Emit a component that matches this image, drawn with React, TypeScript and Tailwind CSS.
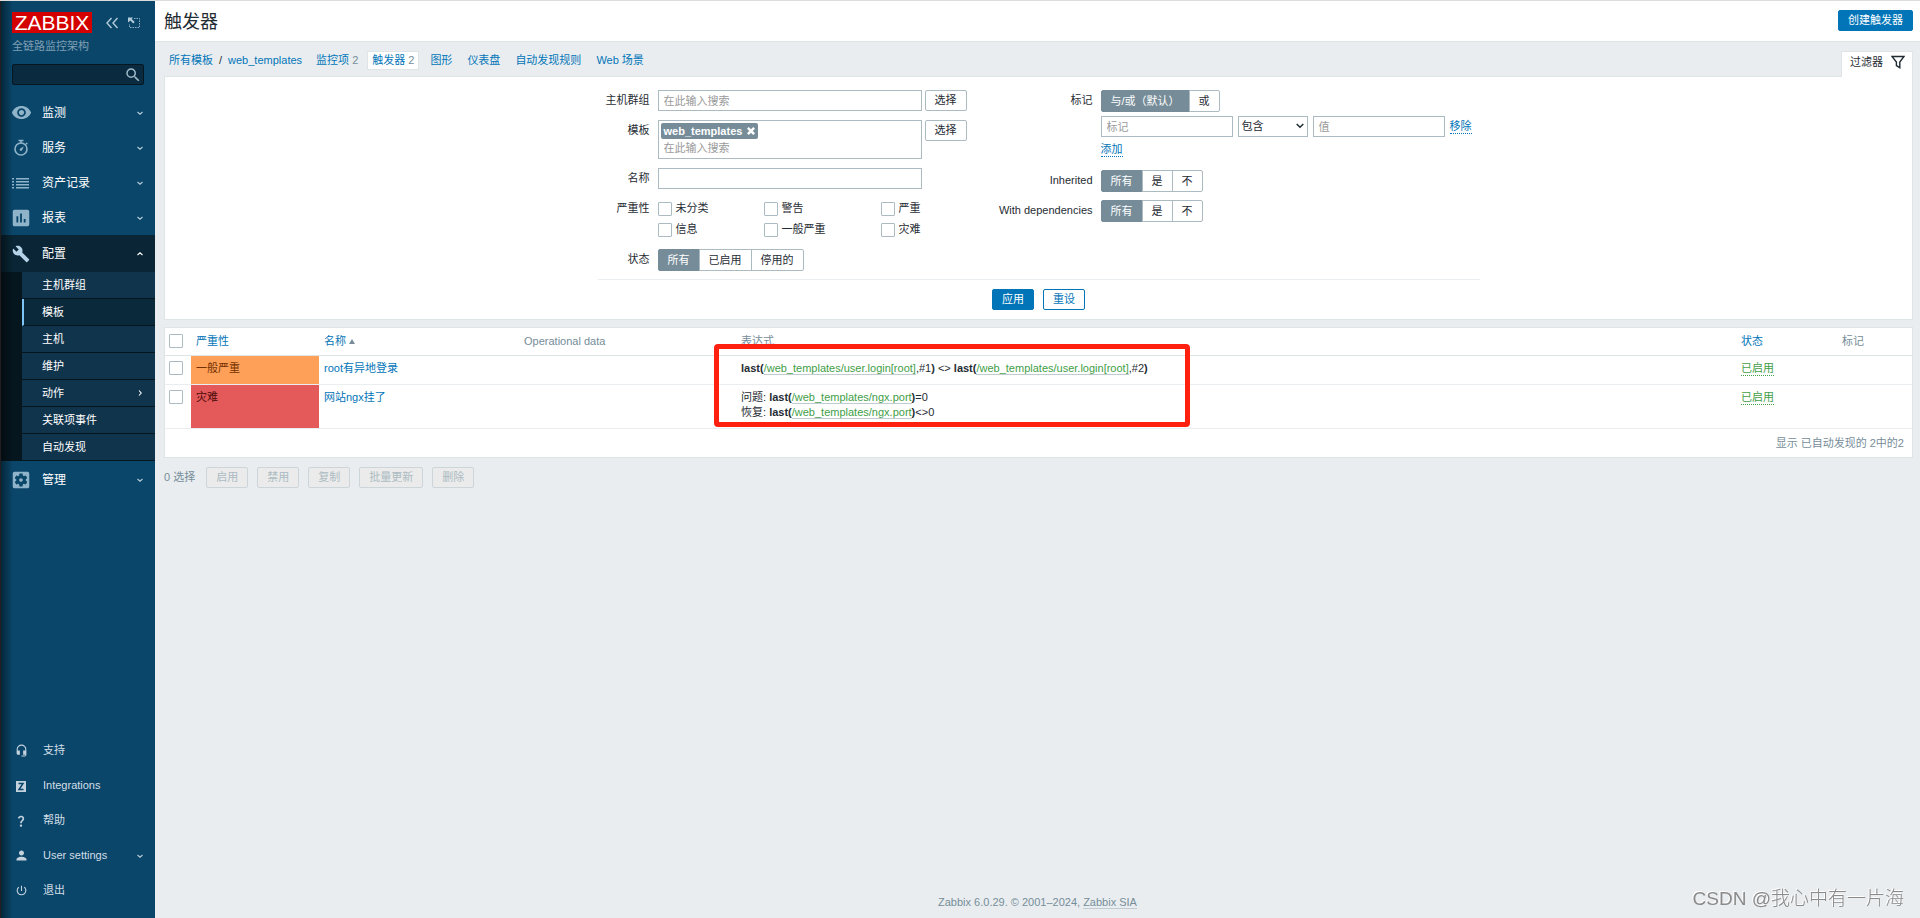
import { useState } from 'react';
import type { ReactNode } from 'react';
import {
  MdVisibility,
  MdInsertChart,
  MdBuild,
  MdSettingsApplications,
  MdSearch,
  MdHeadsetMic,
  MdQuestionMark,
  MdPerson,
  MdPowerSettingsNew,
} from 'react-icons/md';

interface Trigger {
  id: string;
  severity: string;
  severityClass: string;
  name: string;
  expression: ReactNode;
}

const StopwatchIcon = () => (
  <svg width="20" height="20" viewBox="0 0 20 20" fill="none" stroke="currentColor" strokeWidth="1.6">
    <circle cx="10" cy="11" r="6" />
    <path d="M7.5 2.5h5M10 2.5V5M15 5l1.3 1.3" />
    <path d="M9 12.6a1.6 1.6 0 0 1 .2-2.2l3.6-2-1.6 3.6a1.6 1.6 0 0 1-2.2.6z" fill="currentColor" stroke="none" />
  </svg>
);

const ListIcon = () => (
  <svg width="20" height="20" viewBox="0 0 20 20" fill="currentColor">
    <path d="M1 5h2v1.5H1zM5 5h13v1.5H5zM1 8h2v1.5H1zM5 8h13v1.5H5zM1 11h2v1.5H1zM5 11h13v1.5H5zM1 14h2v1.5H1zM5 14h13v1.5H5z" />
  </svg>
);

const IntegrationsIcon = () => (
  <svg width="12" height="12" viewBox="0 0 12 12">
    <rect x="1" y="1" width="10" height="11" fill="currentColor" />
    <path d="M3.500 3.500h4.500L4 9.500h4.500" fill="none" stroke="#0a466a" strokeWidth="1.5" />
  </svg>
);

const Chevron = ({ className = '' }: { className?: string }) => (
  <svg className={className} width="8" height="8" viewBox="0 0 8 8" fill="none" stroke="currentColor" strokeWidth="1.1">
    <path d="M1.500 3 4 5.200 6.500 3" />
  </svg>
);

const mainMenu = [
  { label: '监测', icon: <MdVisibility size={21} /> },
  { label: '服务', icon: <StopwatchIcon /> },
  { label: '资产记录', icon: <ListIcon /> },
  { label: '报表', icon: <MdInsertChart size={22} /> },
];

const configMenu = ['主机群组', '模板', '主机', '维护', '动作', '关联项事件', '自动发现'];

const footerMenu = [
  { label: '支持', icon: <MdHeadsetMic size={13} /> },
  { label: 'Integrations', icon: <IntegrationsIcon /> },
  { label: '帮助', icon: <MdQuestionMark size={14} /> },
  { label: 'User settings', icon: <MdPerson size={15} />, expandable: true },
  { label: '退出', icon: <MdPowerSettingsNew size={13} /> },
];

const severities = ['未分类', '警告', '严重', '信息', '一般严重', '灾难'];

const massActions = ['启用', '禁用', '复制', '批量更新', '删除'];

const ItemLink = ({ children }: { children: ReactNode }) => (
  <a href="#" className="border-b border-[#c0ccd2] text-[#429e47]">{children}</a>
);

const triggers: Trigger[] = [
  {
    id: 'root-login',
    severity: '一般严重',
    severityClass: 'bg-[#ffa059] text-[#733100]',
    name: 'root有异地登录',
    expression: (
      <div>
        <b>last(</b><ItemLink>/web_templates/user.login[root]</ItemLink>,#1<b>)</b> &lt;&gt;{' '}
        <b>last(</b><ItemLink>/web_templates/user.login[root]</ItemLink>,#2<b>)</b>
      </div>
    ),
  },
  {
    id: 'ngx-down',
    severity: '灾难',
    severityClass: 'bg-[#e45959] text-[#4b0c0c]',
    name: '网站ngx挂了',
    expression: (
      <>
        <div>问题: <b>last(</b><ItemLink>/web_templates/ngx.port</ItemLink><b>)</b>=0</div>
        <div>恢复: <b>last(</b><ItemLink>/web_templates/ngx.port</ItemLink><b>)</b>&lt;&gt;0</div>
      </>
    ),
  },
];

const inputClass = 'h-[21px] border border-[#acbbc2] bg-white px-[5px] outline-none placeholder:text-[#9a9a9a]';
const checkboxClass = 'size-[14px] shrink-0 appearance-none rounded-[1px] border border-[#acbbc2] bg-white checked:bg-[#0275b8]';
const plainButton = 'h-[21px] shrink-0 rounded-xs border border-[#acbbc2] bg-white px-[9px]';

function Segmented({ name, options }: { name: string; options: string[] }) {
  const [value, setValue] = useState(options[0]);

  return (
    <div role="radiogroup" aria-label={name} className="flex">
      {options.map(option => (
        <label
          key={option}
          className="relative -ml-px flex h-[22px] items-center border border-[#acbbc2] px-[9px] first:ml-0 first:rounded-l-xs last:rounded-r-xs has-checked:border-[#768d99] has-checked:bg-[#768d99] has-checked:text-white"
        >
          <input
            type="radio"
            name={name}
            className="sr-only"
            checked={value === option}
            onChange={() => setValue(option)}
          />
          {option}
        </label>
      ))}
    </div>
  );
}

function Sidebar() {
  return (
    <aside className="relative flex w-[155px] shrink-0 flex-col border-l border-[#231f20] bg-[#0a466a] text-[#d3dfe7]">
      <div className="flex items-center pt-[11px] pl-[11px]">
        <a href="#" className="flex h-[21px] w-[80px] items-center justify-center bg-[#d40000] text-[21px] leading-[21px] text-white">
          ZABBIX
        </a>
        <button aria-label="Collapse" className="ml-[13px]">
          <svg width="14" height="14" viewBox="0 0 14 14" fill="none" stroke="#b4cbd9" strokeWidth="1.4">
            <path d="M6.5 2 2 7l4.500 5M12.500 2 8 7l4.500 5" />
          </svg>
        </button>
        <button aria-label="Hide" className="ml-2">
          <svg width="14" height="14" viewBox="0 0 14 14" fill="none" stroke="#8fb0c4">
            <path d="M7 2.500h5.500v9h-10V8" strokeDasharray="1.500 1" />
            <path d="M1 1.500h5L4.700 3l3 3-1.400 1.400-3-3L1 6.500z" fill="#b4cbd9" stroke="none" />
          </svg>
        </button>
      </div>
      <div className="mt-1 pl-[11px] leading-[18px] text-[#7f9fb3]">全链路监控架构</div>

      <div className="mt-[9px] mr-[11px] mb-[10px] ml-[11px] flex h-[21px] items-center rounded-xs border border-[#061722] bg-[#0a2a3f]">
        <input aria-label="Search" type="text" className="w-full min-w-0 flex-1 bg-transparent px-1 outline-none" />
        <button aria-label="Find" className="mr-[1px] text-[#9fbac9]"><MdSearch size={18} /></button>
      </div>

      <nav>
        {mainMenu.map(item => (
          <a key={item.label} href="#" className="flex h-[35px] items-center pr-[11px] pl-[9px] text-xs text-white">
            <span className="flex w-[22px] justify-center text-[#8fb3c9]">{item.icon}</span>
            <span className="ml-[10px] flex-1">{item.label}</span>
            <Chevron className="text-[#b4cbd9]" />
          </a>
        ))}

        <a href="#" className="flex h-[37px] items-center bg-[#0a2535] pr-[11px] pl-[9px] text-xs text-white">
          <span className="flex w-[22px] justify-center text-[#b4d3e8]"><MdBuild size={18} /></span>
          <span className="ml-[10px] flex-1">配置</span>
          <Chevron className="rotate-180" />
        </a>
        <ul className="bg-[#05161f] pl-[21px]">
          {configMenu.map(label => (
            <li key={label}>
              <a
                href="#"
                className={
                  label === '模板'
                    ? 'flex h-[27px] items-center border-b border-l-2 border-b-[#05161f] border-l-[#7cc5f5] bg-[#0a2a3c] pr-[11px] pl-[18px] text-white'
                    : 'flex h-[27px] items-center border-b border-[#05161f] bg-[#10344c] pr-[11px] pl-5 text-white'
                }
              >
                <span className="flex-1">{label}</span>
                {label === '动作' && <Chevron className="-rotate-90" />}
              </a>
            </li>
          ))}
        </ul>
        <a href="#" className="flex h-[37px] items-center pr-[11px] pl-[9px] text-xs text-white">
          <span className="flex w-[22px] justify-center text-[#8fb3c9]"><MdSettingsApplications size={22} /></span>
          <span className="ml-[10px] flex-1">管理</span>
          <Chevron className="text-[#b4cbd9]" />
        </a>
      </nav>

      <nav className="mt-auto pb-[10px]">
        {footerMenu.map(item => (
          <a key={item.label} href="#" className="flex h-[35px] items-center pr-[11px] pl-[9px]">
            <span className="flex w-[22px] justify-center text-[#c3d2dd]">{item.icon}</span>
            <span className="ml-[11px] flex-1">{item.label}</span>
            {item.expandable && <Chevron className="text-[#b4cbd9]" />}
          </a>
        ))}
      </nav>

      {/* shade along the window edge */}
      <div className="pointer-events-none absolute inset-y-0 left-0 w-3 bg-linear-to-r from-black/45 to-transparent" />
    </aside>
  );
}

function PageTabs() {
  return (
    <div className="flex h-[34px] items-end justify-between pr-[7px] pl-2">
      <nav className="flex h-full items-center pt-[3px] pl-[6px] text-[#0275b8]">
        <a href="#">所有模板</a>
        <span className="mx-[6px] text-[#1f2c33]">/</span>
        <a href="#">web_templates</a>
        <a href="#" className="ml-[14px]">监控项 <span className="text-[#768d99]">2</span></a>
        <a href="#" className="mx-[9px] flex h-[19px] items-center gap-[3px] border border-[#dfe4e7] bg-white px-[4px]">
          触发器 <span className="text-[#768d99]">2</span>
        </a>
        <div className="ml-[2px] flex gap-[15px]">
          <a href="#">图形</a>
          <a href="#">仪表盘</a>
          <a href="#">自动发现规则</a>
          <a href="#">Web 场景</a>
        </div>
      </nav>
      <button className="z-10 -mb-px flex h-[26px] items-center gap-2 border border-b-0 border-[#dfe4e7] bg-white pr-[7px] pb-[5px] pl-2">
        过滤器
        <svg width="14" height="14" viewBox="0 0 14 14" fill="none" stroke="#1f2c33" strokeWidth="1.400">
          <path d="M1 1.500h12L8.800 7v5.700L5.400 10.500V7z" />
        </svg>
      </button>
    </div>
  );
}

function FilterPanel() {
  const [showTemplate, setShowTemplate] = useState(true);

  return (
    <form className="border border-[#dfe4e7] bg-white pt-[13px] pb-[9px]" onSubmit={e => e.preventDefault()}>
      <div className="mx-auto max-w-[882px]">
        <div className="flex pb-2">
          <div className="flex flex-col gap-[9px]">
            <div className="flex">
              <label htmlFor="groups" className="mr-2 w-[52px] text-right leading-[21px]">主机群组</label>
              <input id="groups" type="text" placeholder="在此输入搜索" className={`${inputClass} w-[264px]`} />
              <button type="button" className={`${plainButton} ml-[3px]`}>选择</button>
            </div>
            <div className="flex items-start">
              <label htmlFor="templates" className="mr-2 w-[52px] text-right leading-[21px]">模板</label>
              <div className="flex h-[39px] w-[264px] flex-col items-start border border-[#acbbc2] px-[2px] pt-[2px]">
                {showTemplate && (
                  <span className="flex h-[16px] items-center gap-[5px] rounded-xs bg-[#768d99] px-[3px] font-bold text-white">
                    web_templates
                    <button type="button" aria-label="Remove" onClick={() => setShowTemplate(false)}>
                      <svg width="8" height="8" viewBox="0 0 9 9" stroke="currentColor" strokeWidth="2.800">
                        <path d="M1 1l7 7M8 1 1 8" />
                      </svg>
                    </button>
                  </span>
                )}
                <input id="templates" type="text" placeholder="在此输入搜索" className="h-[18px] w-full px-[3px] outline-none placeholder:text-[#9a9a9a]" />
              </div>
              <button type="button" className={`${plainButton} ml-[3px]`}>选择</button>
            </div>
            <div className="flex">
              <label htmlFor="name" className="mr-2 w-[52px] text-right leading-[21px]">名称</label>
              <input id="name" type="text" className={`${inputClass} w-[264px]`} />
            </div>
            <div className="flex">
              <span className="mr-2 w-[52px] text-right leading-[21px]">严重性</span>
              <div className="grid grid-cols-[106px_117px_auto]">
                {severities.map(severity => (
                  <label key={severity} className="flex h-[21px] items-center gap-[4px]">
                    <input type="checkbox" className={checkboxClass} />
                    {severity}
                  </label>
                ))}
              </div>
            </div>
            <div className="flex">
              <span className="mr-2 w-[52px] text-right leading-[21px]">状态</span>
              <Segmented name="状态" options={['所有', '已启用', '停用的']} />
            </div>
          </div>

          <div className="flex flex-col gap-[8px]">
            <div className="flex">
              <span className="mr-2 w-[126px] text-right leading-[21px]">标记</span>
              <div className="flex flex-col items-start">
                <Segmented name="标记" options={['与/或（默认）', '或']} />
                <div className="mt-1 flex items-center gap-[5px]">
                  <input aria-label="标记" type="text" placeholder="标记" className={`${inputClass} w-[132px]`} />
                  <div className="relative flex">
                    <select aria-label="操作" className="h-[21px] w-[70px] appearance-none border border-[#acbbc2] bg-white pl-[3px]">
                      <option>包含</option>
                      <option>等于</option>
                    </select>
                    <svg className="pointer-events-none absolute top-[6px] right-[4px]" width="8" height="8" viewBox="0 0 8 8" fill="none" stroke="#1f2c33" strokeWidth="1.500">
                      <path d="M.7 2 4 5.300 7.300 2" />
                    </svg>
                  </div>
                  <input aria-label="值" type="text" placeholder="值" className={`${inputClass} w-[132px]`} />
                  <button type="button" className="border-b border-dotted border-[#0275b8] leading-[14px] text-[#0275b8]">移除</button>
                </div>
                <button type="button" className="mt-[5px] mb-[5px] border-b border-dotted border-[#0275b8] leading-[14px] text-[#0275b8]">添加</button>
              </div>
            </div>
            <div className="flex">
              <span className="mr-2 w-[126px] text-right leading-[21px]">Inherited</span>
              <Segmented name="Inherited" options={['所有', '是', '不']} />
            </div>
            <div className="flex">
              <span className="mr-2 w-[126px] text-right leading-[21px]">With dependencies</span>
              <Segmented name="With dependencies" options={['所有', '是', '不']} />
            </div>
          </div>
        </div>

        <div className="flex justify-center gap-[9px] border-t border-[#ebeef0] pt-[9px]">
          <button type="submit" className="h-[21px] rounded-xs border border-[#0275b8] bg-[#0275b8] px-[9px] text-white">应用</button>
          <button type="reset" className="h-[21px] rounded-xs border border-[#0275b8] bg-white px-[9px] text-[#0275b8]">重设</button>
        </div>
      </div>
    </form>
  );
}

function TriggerTable() {
  return (
    <div className="relative mt-[7px] border border-[#dfe4e7] bg-white">
      <table className="w-full table-fixed text-left">
        <colgroup>
          <col className="w-[26px]" />
          <col className="w-[128px]" />
          <col className="w-[200px]" />
          <col className="w-[217px]" />
          <col />
          <col className="w-[101px]" />
          <col className="w-[75px]" />
        </colgroup>
        <thead className="text-[#768d99]">
          <tr className="h-[27px] border-b border-[#dfe4e7] *:px-[5px] *:font-normal">
            <th><input aria-label="全选" type="checkbox" className={`${checkboxClass} -ml-px block`} /></th>
            <th><a href="#" className="text-[#0275b8]">严重性</a></th>
            <th>
              <a href="#" className="flex items-center gap-[3px] text-[#0275b8]">
                名称
                <svg width="6" height="5" viewBox="0 0 6 5" fill="#768d99"><path d="M3 0l3 5H0z" /></svg>
              </a>
            </th>
            <th>Operational data</th>
            <th>表达式</th>
            <th><a href="#" className="text-[#0275b8]">状态</a></th>
            <th>标记</th>
          </tr>
        </thead>
        <tbody>
          {triggers.map(trigger => (
            <tr key={trigger.id} className="border-b border-[#ebeef0] align-top leading-[15px] *:px-[5px] *:pt-[5px] *:pb-[8px]">
              <td><input aria-label={trigger.name} type="checkbox" className={`${checkboxClass} -ml-px block`} /></td>
              <td className={trigger.severityClass}>{trigger.severity}</td>
              <td><a href="#" className="text-[#0275b8]">{trigger.name}</a></td>
              <td />
              <td>{trigger.expression}</td>
              <td><button className="block border-b border-dotted border-[#429e47] leading-[14px] text-[#429e47]">已启用</button></td>
              <td />
            </tr>
          ))}
        </tbody>
      </table>
      <div className="pr-2 text-right leading-[28px] text-[#768d99]">显示 已自动发现的 2中的2</div>

      {/* highlight drawn over the expressions */}
      <div className="pointer-events-none absolute top-4 left-[549px] h-[83px] w-[476px] rounded-sm border-[5px] border-[#ff2010]" />
    </div>
  );
}

export default function App() {
  return (
    <div className="flex min-h-screen border-t border-[#dcdcdc] bg-[#e9edf0] font-['Liberation_Sans','Noto_Sans_CJK_SC',sans-serif] text-[11px] leading-[15px] text-[#1f2c33]">
      <Sidebar />
      <main className="flex min-w-0 flex-1 flex-col">
        <header className="flex h-[41px] items-center justify-between border-b border-[#dfe4e7] bg-white pr-[7px] pb-px pl-[9px]">
          <h1 className="pt-[2px] text-lg leading-[24px]">触发器</h1>
          <button className="h-[21px] rounded-xs border border-[#0275b8] bg-[#0275b8] px-[9px] text-white">创建触发器</button>
        </header>
        <PageTabs />
        <div className="pr-[7px] pl-[9px]">
          <FilterPanel />
          <TriggerTable />
          <div className="mt-[9px] flex items-center gap-[9px] text-[#768d99]">
            <span className="mr-[2px]">0 选择</span>
            {massActions.map(action => (
              <button key={action} disabled className="h-[21px] rounded-xs border border-[#ccd5d9] bg-[#ebebeb] px-[9px] text-[#acbbc2]">
                {action}
              </button>
            ))}
          </div>
        </div>
        <footer className="mt-auto pb-2 text-center text-[#768d99]">
          Zabbix 6.0.29. © 2001–2024, <a href="#" className="border-b border-[#c0ccd2]">Zabbix SIA</a>
        </footer>
      </main>
      <div className="pointer-events-none fixed right-[16px] bottom-[5px] text-[19px] leading-[28px] font-light text-[#8a8a8a] [text-shadow:-1px_-1px_0_#fff]">
        CSDN @我心中有一片海
      </div>
    </div>
  );
}
